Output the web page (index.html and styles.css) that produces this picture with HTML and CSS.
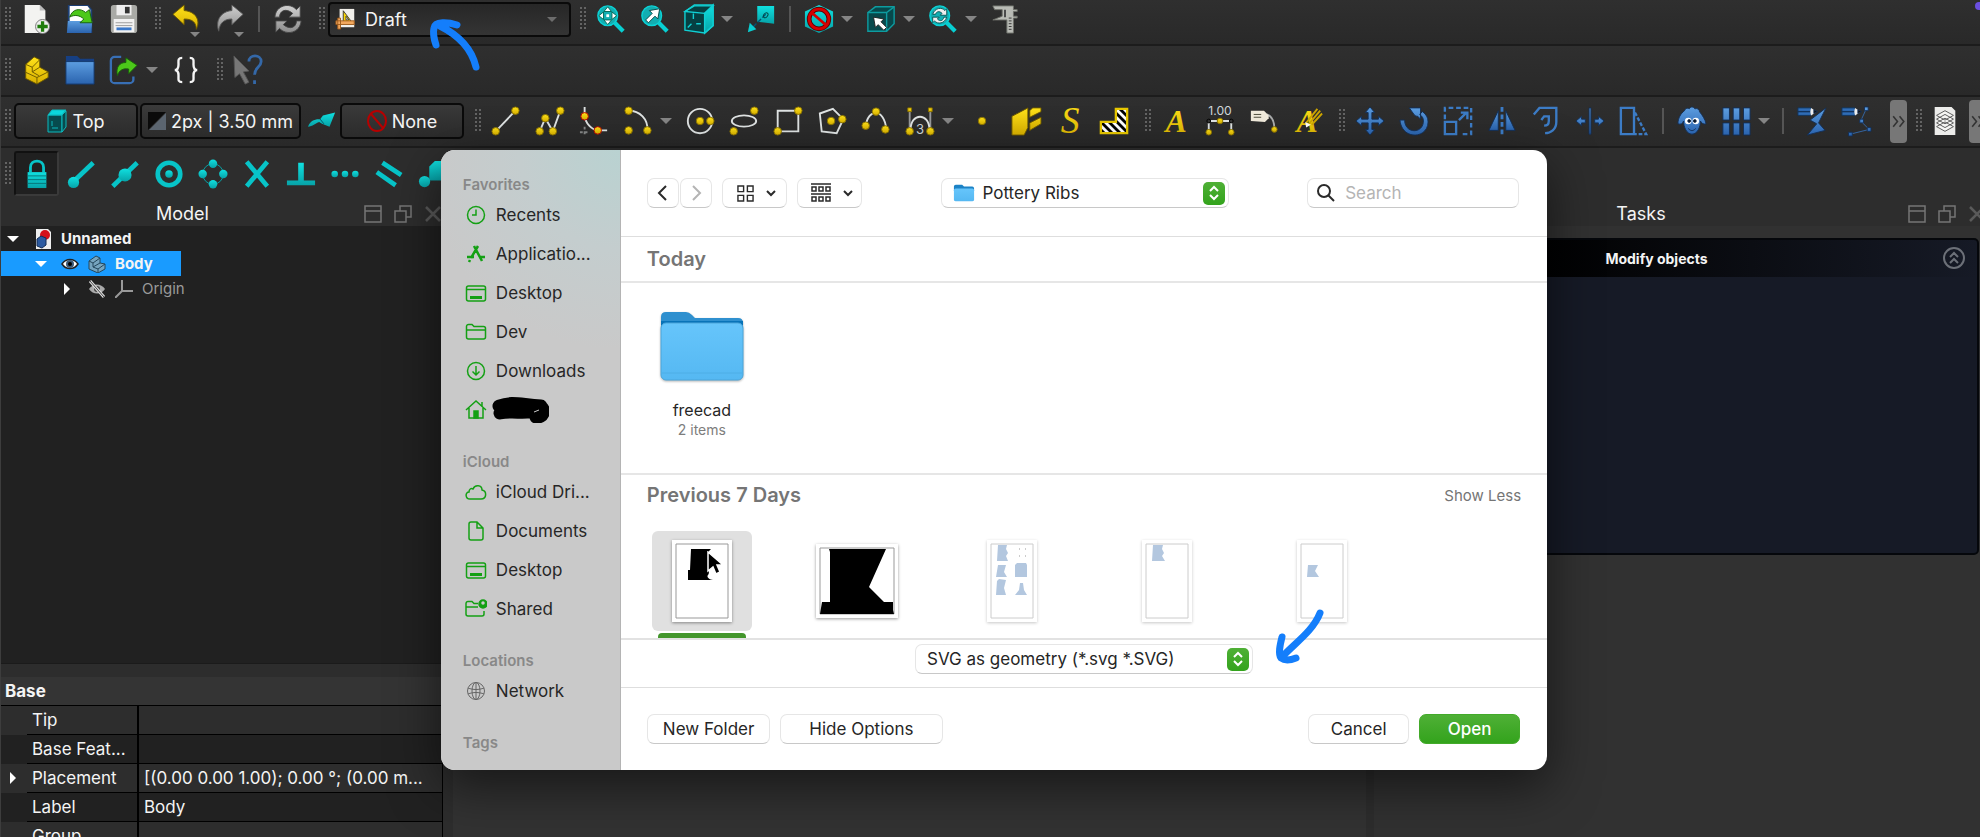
FILE: index.html
```
<!DOCTYPE html>
<html lang="en">
<head>
    <meta charset="UTF-8">
    <meta name="viewport" content="width=device-width, initial-scale=1.0">
    <title>FreeCAD - Import</title>
    <link rel="stylesheet" href="styles.css">
</head>
<body>
    <!-- Shared gradients and symbols -->
    <svg class="defs" aria-hidden="true">
        <defs>
            <linearGradient id="yellow" x1="0" y1="0" x2="0" y2="1"><stop offset="0" stop-color="#ffe21a"/><stop offset="1" stop-color="#d8b000"/></linearGradient>
            <linearGradient id="cyan" x1="0" y1="0" x2="0" y2="1"><stop offset="0" stop-color="#10e0e0"/><stop offset="1" stop-color="#06a3a8"/></linearGradient>
            <linearGradient id="blue" x1="0" y1="0" x2="0" y2="1"><stop offset="0" stop-color="#5c9de0"/><stop offset="1" stop-color="#2a63ae"/></linearGradient>
            <linearGradient id="grey" x1="0" y1="0" x2="0" y2="1"><stop offset="0" stop-color="#d0d0d0"/><stop offset="1" stop-color="#8c8c8c"/></linearGradient>
            <linearGradient id="folder" x1="0" y1="0" x2="0" y2="1"><stop offset="0" stop-color="#66c5fb"/><stop offset="1" stop-color="#55b8f2"/></linearGradient>
            <pattern id="hatch" width="6" height="6" patternUnits="userSpaceOnUse" patternTransform="rotate(-45)"><rect width="6" height="6" fill="#fff"/><rect width="3" height="6" fill="#000"/></pattern>
            <g id="lens"><path d="M20 20l9 9" stroke="#08cfd2" stroke-width="4.500"/><circle cx="12.500" cy="12.500" r="10.500" fill="#12aeb2" stroke="#0bd3d6" stroke-width="1.500"/></g>
            <g id="pencil"><path d="M1 2h14v8H1z" fill="#2f6cb5" stroke="#12335c"/><path d="M1 6h13" stroke="#12335c" stroke-width="1.500"/><path d="M15 2l6 4-6 4c-1-2-1-6 0-8z" fill="#eee" stroke="none"/><path d="M18 4l4 2-4 2z" fill="#111"/></g>
            <g id="foldericon"><path d="M3 3h7l2 2h9a2 2 0 0 1 2 2v3H1V5a2 2 0 0 1 2-2z" fill="#1b82c6"/><rect x="1" y="7" width="22" height="14" rx="2" fill="url(#folder)"/></g>
            <g id="desktop" fill="none" stroke="#14a014" stroke-width="1.500"><rect x="1.500" y="4" width="19" height="15" rx="2"/><path d="M2 7.500h18"/><path d="M5 15.500h12" stroke-width="3"/></g>
        </defs>
    </svg>

    <div class="app">
        <!-- File and view toolbar -->
        <div class="toolbar first">
            <span class="grip"></span>
            <button class="tool" aria-label="New"><svg viewBox="0 0 32 32"><path d="M4 1h16l6 6v24H4z" fill="#f3f3f1"/><path d="M20 1v6h6z" fill="#bbb"/><circle cx="23" cy="24" r="7.500" fill="#eee" stroke="#777"/><path d="M23 18.500v11M17.500 24h11" stroke="#1f7d0c" stroke-width="3.500"/></svg></button>
            <button class="tool" aria-label="Open"><svg viewBox="0 0 32 32"><path d="M3 1h22l4 5v25H3z" fill="#1c3f75"/><path d="M5 2h19l3 4v12H5z" fill="#fff"/><path d="M3 18h26l-1 13H2z" fill="url(#blue)"/><path d="M5 14C8 5 16 4 22 9l4-3 3 14-13 0 4-4C16 12 10 11 5 14z" fill="#4cc81a" stroke="#17600a"/></svg></button>
            <button class="tool" aria-label="Save"><svg viewBox="0 0 32 32"><rect x="2" y="1" width="28" height="30" rx="3" fill="#a9aaa6"/><path d="M8 1h16v11H8z" fill="#eee"/><path d="M17 3h5v7h-5z" fill="#333"/><path d="M5 16h22v14H5z" fill="#f2f2f2"/><path d="M7 20h18M7 23h18" stroke="#999"/><path d="M8 25h16v3H8z" fill="#3a78ca"/></svg></button>
            <span class="grip"></span>
            <button class="tool" aria-label="Undo"><svg viewBox="0 0 32 32"><path d="M2 11L14 1v6c12 1 18 10 13 20 0-8-5-11-13-11v6z" fill="url(#yellow)" stroke="#6b5800"/></svg><i class="mini"></i></button>
            <button class="tool" aria-label="Redo"><svg viewBox="0 0 32 32"><path d="M30 11L18 1v6C6 8 0 18 4 29c1-9 6-13 14-13v6z" fill="url(#grey)" stroke="#555"/></svg><i class="mini"></i></button>
            <span class="sep"></span>
            <button class="tool" aria-label="Refresh"><svg viewBox="0 0 32 32"><path d="M2 14C3 1 18-2 25 6l4-4v12H17l4-4C14 4 7 7 7 14zM30 18C29 31 14 34 7 26l-4 4V18h12l-4 4c7 6 14 3 14-4z" fill="url(#grey)" stroke="#444"/></svg></button>
            <span class="grip"></span>
            <label class="workbench">
                <svg viewBox="0 0 24 24"><path d="M5 1h16v20H5z" fill="#f1efea"/><path d="M9 3v12h9z" fill="#ffd900" stroke="#333"/><path d="M12 9v4h3z" fill="#fff" stroke="#333"/><path d="M1 14h20v4H1zM3 11h3v12H3z" fill="#f2a85e" stroke="#9c5a1a"/></svg>
                <select aria-label="Workbench"><option>Draft</option><option>Part Design</option><option>Sketcher</option></select>
            </label>
            <span class="grip"></span>
            <button class="tool" aria-label="Fit all"><svg viewBox="0 0 32 32"><use href="#lens"/><path d="M12.500 3l4 5h-8zM12.500 22l4-5h-8zM3 12.500l5-4v8zM22 12.500l-5-4v8z" fill="#fff" stroke="#065"/><path d="M11 11h3v3h-3z" fill="#fff"/></svg></button>
            <button class="tool" aria-label="Fit selection"><svg viewBox="0 0 32 32"><use href="#lens"/><path d="M6 17l7-7-3-3 11-2-2 11-3-3-7 7z" fill="#fff" stroke="#044"/></svg></button>
            <button class="tool" aria-label="Isometric view"><svg viewBox="0 0 32 32" fill="#063f42" stroke="#10cfd3" stroke-width="1.500"><path d="M1 8L11 1h20v22l-9 8L1 28z"/><path d="M22 10l9-9v22l-9 8z" fill="url(#cyan)"/><path d="M1 8l10-6h20l-9 8zM10 10v6M8 21l-4 4M13 21h5" fill="none"/></svg></button>
            <button class="caret" aria-label="More views"></button>
            <button class="tool" aria-label="Go to linked object"><svg viewBox="0 0 32 32"><path d="M12 2h18v19L12 19z" fill="url(#cyan)"/><path d="M21 11L6 26" stroke="#057" stroke-width="1.500" stroke-dasharray="5 2"/><path d="M2 30l2-10 7 7z" fill="#09cdd0"/><ellipse cx="21" cy="12" rx="2" ry="3" fill="none" stroke="#044" transform="rotate(40 21 12)"/></svg></button>
            <span class="sep"></span>
            <button class="tool" aria-label="Draw style"><svg viewBox="0 0 32 32"><path d="M16 1l15 7v16l-15 7-15-7V8z" fill="url(#cyan)"/><circle cx="16" cy="16" r="10.500" fill="none" stroke="#5e0000" stroke-width="5"/><circle cx="16" cy="16" r="10.500" fill="none" stroke="#d40000" stroke-width="3"/><path d="M8 9l16 14" stroke="#d40000" stroke-width="3"/></svg></button>
            <button class="caret" aria-label="More draw styles"></button>
            <button class="tool" aria-label="Box selection"><svg viewBox="0 0 32 32" fill="#07484b" stroke="#0e9ca0" stroke-width="1.500"><path d="M2 9l8-6h20v18l-8 8H2z"/><path d="M2 9h20l8-6M22 9v20" fill="none"/><path d="M8 14l11 2-3 3 6 6-3 3-6-6-3 3z" fill="#fff" stroke="#222" stroke-width="1"/></svg></button>
            <button class="caret" aria-label="More selection modes"></button>
            <button class="tool" aria-label="Sync view"><svg viewBox="0 0 32 32"><use href="#lens"/><path d="M5 11c2-7 10-8 13-4l2-2v7h-7l2-2c-3-3-6-2-7 1zM20 14c-2 7-10 8-13 4l-2 2v-6h7l-2 2c3 3 6 2 7-2z" fill="#eee" stroke="#055"/></svg></button>
            <button class="caret" aria-label="More sync modes"></button>
            <button class="tool" aria-label="Measure"><svg viewBox="0 0 32 32"><path d="M3 2h22v4h4v2h-4v5h4v2h-4v16h-7V17H3l10-4V6H5z" fill="#b9bbb5" stroke="#6d6f69"/><path d="M16 6v8" stroke="#444" stroke-width="2"/><path d="M20 15h3M20 18h3M20 21h3M20 24h3M20 27h3" stroke="#333"/></svg></button>
        </div>

        <!-- Structure toolbar -->
        <div class="toolbar">
            <span class="grip"></span>
            <button class="tool" aria-label="Create part"><svg viewBox="0 0 32 32" fill="url(#yellow)" stroke="#6b5800"><path d="M5 10l9-8 6 3v8l9 5v6l-12 7-12-6z"/><path d="M5 10l7 3 8-8M12 13v5l8-5M4 18l13 6 12-6M17 24v7M12 18l7 4" fill="none"/></svg></button>
            <button class="tool" aria-label="Create group"><svg viewBox="0 0 32 32"><path d="M1 1h12l3 3h15v8H1z" fill="#163f82"/><path d="M1 7h30v24H1z" fill="url(#blue)" stroke="#143a6e"/></svg></button>
            <button class="tool" aria-label="Make link"><svg viewBox="0 0 32 32"><path d="M13 2H6a4 4 0 0 0-4 4v20a4 4 0 0 0 4 4h16a4 4 0 0 0 4-4v-3" fill="none" stroke="#386fb5" stroke-width="2.500"/><path d="M9 22C7 13 11 8 18 8V3l12 8-9 9v-5c-6-1-10 1-12 7z" fill="#4cc81a" stroke="#17600a"/></svg></button>
            <button class="caret" aria-label="More links"></button>
            <button class="tool" aria-label="Variable set"><svg viewBox="0 0 32 32" fill="none" stroke="#f5f5f5" stroke-width="2.500"><path d="M12 3C7 3 8 6 8 10s-1 6-4 6c3 0 4 2 4 6s-1 7 4 7M20 3c5 0 4 3 4 7s1 6 4 6c-3 0-4 2-4 6s1 7-4 7"/></svg></button>
            <span class="grip"></span>
            <button class="tool" aria-label="What's this?"><svg viewBox="0 0 32 32"><path d="M1 1l16 16-6 1 6 11-4 2-6-11-5 4z" fill="#777" stroke="#555"/><path d="M17 7c0-8 13-8 13 0 0 6-7 6-7 14M23 27v4" fill="none" stroke="#3468a8" stroke-width="3"/></svg></button>
        </div>

        <!-- Draft tools toolbar -->
        <div class="toolbar">
            <span class="grip"></span>
            <button class="tray plane"><svg viewBox="0 0 20 24" fill="#074b4e" stroke="#0db9bd" stroke-width="1"><path d="M1 6h14v17H1z"/><path d="M15 6l4-4v16l-4 5z"/><path d="M1 6l4-5h14l-4 5z" fill="#0bd8dc"/><path d="M5 12v5M5 19h6" fill="none"/></svg>Top</button>
            <button class="tray style"><svg viewBox="0 0 18 18"><path d="M0 0h18L0 18z" fill="#0a0a0a"/><path d="M18 1v17H1z" fill="#5b6570"/></svg>2px | 3.50 mm</button>
            <button class="tool narrow" aria-label="Toggle construction mode"><svg viewBox="0 0 32 32"><path d="M1 22c3-8 9-8 13-8l3-4 13-3-6 15-8-3-3-2c-4 1-7 5-12 5z" fill="url(#cyan)"/><path d="M14 14l4 5" stroke="#056"/></svg></button>
            <button class="tray plane"><svg viewBox="0 0 20 24" fill="none" stroke="#b60000" stroke-width="2"><ellipse cx="10" cy="12" rx="9" ry="10"/><path d="M4 5l12 14"/></svg>None</button>
            <span class="grip"></span>
            <button class="tool" aria-label="Line"><svg viewBox="0 0 32 32" class="draft"><path d="M5 27L26 5"/><circle cx="5" cy="27" r="4"/><circle cx="26" cy="5" r="4"/></svg></button>
            <button class="tool" aria-label="Polyline"><svg viewBox="0 0 32 32" class="draft"><path d="M5 27l6-14 8 14 8-22"/><circle cx="5" cy="27" r="4"/><circle cx="11" cy="13" r="4"/><circle cx="19" cy="27" r="4"/><circle cx="27" cy="5" r="4"/></svg></button>
            <button class="tool" aria-label="Fillet"><svg viewBox="0 0 32 32" class="draft red"><path d="M6 1v8c0 9 8 17 15 17h9"/><path d="M6 22v9M1 28h9" stroke-dasharray="3 2" opacity=".5"/><circle cx="6" cy="11" r="4"/><circle cx="20" cy="26" r="4"/></svg></button>
            <button class="tool" aria-label="Arc"><svg viewBox="0 0 32 32" class="draft"><path d="M6 5c12 0 21 9 20 21"/><circle cx="6" cy="5" r="4"/><circle cx="6" cy="26" r="4"/><circle cx="26" cy="26" r="4"/></svg></button>
            <button class="caret" aria-label="More arcs"></button>
            <button class="tool" aria-label="Circle"><svg viewBox="0 0 32 32" class="draft"><circle cx="16" cy="16" r="13" class="shape"/><circle cx="16" cy="16" r="4"/><circle cx="27" cy="16" r="4"/></svg></button>
            <button class="tool" aria-label="Ellipse"><svg viewBox="0 0 32 32" class="draft"><ellipse cx="16" cy="16" rx="13" ry="6" class="shape"/><circle cx="5" cy="27" r="4"/><circle cx="27" cy="5" r="4"/></svg></button>
            <button class="tool" aria-label="Rectangle"><svg viewBox="0 0 32 32" class="draft"><path d="M5 5h22v22H5z"/><circle cx="5" cy="27" r="4"/><circle cx="27" cy="5" r="4"/></svg></button>
            <button class="tool" aria-label="Polygon"><svg viewBox="0 0 32 32" class="draft"><path d="M17 3l11 11-7 15-16-2L3 8z"/><circle cx="15" cy="16" r="4"/><circle cx="27" cy="14" r="4"/></svg></button>
            <button class="tool" aria-label="B-spline"><svg viewBox="0 0 32 32" class="draft"><path d="M5 22C7 2 25 2 27 25"/><circle cx="5" cy="21" r="4"/><circle cx="16" cy="6" r="4"/><circle cx="26" cy="25" r="4"/></svg></button>
            <button class="tool" aria-label="Bezier curve"><svg viewBox="0 0 32 32" class="draft"><path d="M5 4v23M27 4v23" opacity=".6"/><path d="M6 25c0-18 20-18 20 0"/><circle cx="5" cy="27" r="4"/><circle cx="27" cy="27" r="4"/><path d="M3 2h4v4H3zM25 2h4v4h-4z" class="dot"/><text x="16" y="30" class="num">3</text></svg></button>
            <button class="caret" aria-label="More curves"></button>
            <button class="tool" aria-label="Point"><svg viewBox="0 0 32 32" class="draft"><circle cx="16" cy="16" r="4"/></svg></button>
            <button class="tool" aria-label="Facebinder"><svg viewBox="0 0 32 32" fill="url(#yellow)" stroke="#6b5800"><path d="M1 11L18 2v21l-4 8H1z"/><path d="M20 5l3-3h9v4l-12 6zM20 18l12-6v7l-12 7z"/></svg></button>
            <button class="tool" aria-label="ShapeString"><svg viewBox="0 0 32 32"><text x="16" y="29" class="glyph swash">S</text></svg></button>
            <button class="tool" aria-label="Hatch"><svg viewBox="0 0 32 32"><path d="M18 3h12v26H2V17h16z" fill="url(#hatch)" stroke="#e8c800" stroke-width="2.500"/></svg></button>
            <span class="grip"></span>
            <button class="tool" aria-label="Text"><svg viewBox="0 0 32 32"><text x="16" y="28" class="glyph">A</text></svg></button>
            <button class="tool" aria-label="Dimension"><svg viewBox="0 0 32 32" class="draft"><text x="16" y="10" class="num small">1.00</text><path d="M4 16v12M28 16v12M4 16h24"/><circle cx="4" cy="28" r="3"/><circle cx="28" cy="28" r="3"/><circle cx="16" cy="16" r="3"/><circle cx="4" cy="16" r="2" class="ring"/><circle cx="28" cy="16" r="2" class="ring"/></svg></button>
            <button class="tool" aria-label="Label"><svg viewBox="0 0 32 32" class="draft"><path d="M19 9c6 2 8 7 8 15" opacity=".7"/><path d="M2 5h14l5 5v3l-4 4-15-1z" fill="#f1ebdc" stroke="none"/><path d="M5 9h8M5 12h8" stroke="#443" stroke-width="1"/><circle cx="27" cy="25" r="3"/></svg></button>
            <button class="tool" aria-label="Annotation styles"><svg viewBox="0 0 32 32"><text x="15" y="28" class="glyph">A</text><path d="M14 18L26 3M17 19L29 5M20 20L31 8" stroke="#cda500" stroke-width="2"/><path d="M13 17l6 3-5 3z" fill="#fff"/></svg></button>
            <span class="grip"></span>
            <button class="tool" aria-label="Move"><svg viewBox="0 0 32 32" class="modify"><path d="M16 1l5 6h-3v7h7v-3l6 5-6 5v-3h-7v7h3l-5 6-5-6h3v-7H7v3l-6-5 6-5v3h7V7h-3z"/></svg></button>
            <button class="tool" aria-label="Rotate"><svg viewBox="0 0 32 32" class="modify"><path d="M11 2h12v12l-3-3c-2 0-3-1-4-2zM1 15h5c0 15 20 15 20 1 0-3-1-5-4-7l3-3c4 3 6 6 6 11 0 18-28 20-30-2z"/></svg></button>
            <button class="tool" aria-label="Scale"><svg viewBox="0 0 32 32" class="modify line"><path d="M2 14V2h28v28H18" stroke-dasharray="5 3"/><path d="M2 17h12v13H2z"/><path d="M17 15l8-8M19 7h7v7"/></svg></button>
            <button class="tool" aria-label="Mirror"><svg viewBox="0 0 32 32" class="modify"><path d="M12 5v21H2zM20 5v21h10z"/><path d="M16 1v30" class="dash"/></svg></button>
            <button class="tool" aria-label="Offset"><svg viewBox="0 0 32 32" class="modify line"><path d="M3 9l6-7h18v15c0 8-6 12-12 12"/><path d="M11 15l3-4h5v5c0 3-2 5-5 5"/></svg></button>
            <button class="tool" aria-label="Trimex"><svg viewBox="0 0 32 32" class="modify"><path d="M15 2h2v28h-2zM1 16l6-5v3h4v4H7v3zM31 16l-6-5v3h-4v4h4v3z"/></svg></button>
            <button class="tool" aria-label="Stretch"><svg viewBox="0 0 32 32" class="modify line"><path d="M2 2h14v28H2z"/><path d="M17 7l12 23H17" stroke-dasharray="4 2"/></svg></button>
            <span class="sep"></span>
            <button class="tool" aria-label="Clone"><svg viewBox="0 0 32 32" class="modify"><path d="M8 5c1-3 4-3 5-2 2-3 5-2 6 0 3-1 5 1 5 3 3 4 6 8 7 13-3 1-5-1-6-3 0 6-3 14-9 14S7 22 7 16c-1 3-3 4-6 3 0-6 3-11 7-14z"/><circle cx="12" cy="16" r="3.500" fill="#fff" stroke="none"/><circle cx="20" cy="16" r="3.500" fill="#fff" stroke="none"/><circle cx="13" cy="16" r="1.500" fill="#111"/><circle cx="19" cy="16" r="1.500" fill="#111"/><path d="M12 24c3 3 5 3 8 0" fill="none"/></svg></button>
            <button class="tool" aria-label="Array"><svg viewBox="0 0 32 32" class="modify"><path d="M2 2h7v13H2zM13 2h7v13h-7zM24 2h7v13h-7zM2 18h7v13H2zM13 18h7v13h-7zM24 18h7v13h-7z"/></svg></button>
            <button class="caret" aria-label="More arrays"></button>
            <span class="sep"></span>
            <button class="tool" aria-label="Edit"><svg viewBox="0 0 32 32" class="modify"><path d="M31 2L14 15l7 4-10 12 19-5-7-8z"/><use href="#pencil"/></svg></button>
            <button class="tool" aria-label="Subelement highlight"><svg viewBox="0 0 32 32" class="modify"><path d="M27 3l-6 13 9 9-20 5" fill="none" stroke="#3468a8"/><path d="M25 1h4v4h-4zM20 14h4v4h-4zM28 23h4v4h-4zM8 28h4v4H8z"/><use href="#pencil"/></svg></button>
            <button class="more" aria-label="More tools"><svg viewBox="0 0 16 16" fill="none" stroke="#333" stroke-width="1.500"><path d="M3 3l4 5-4 5M9 3l4 5-4 5"/></svg></button>
            <span class="grip"></span>
            <button class="tool layers" aria-label="Layers"><svg viewBox="0 0 32 32"><path d="M5 1h18l4 4v26H5z" fill="#ececea"/><path d="M7 22l9 5 9-5-9-5zM7 18l9 5 9-5-9-5zM7 14l9 5 9-5-9-5zM7 10l9 5 9-5-9-5z" fill="#f5f5f3" stroke="#555"/></svg></button>
            <button class="more" aria-label="More utilities"><svg viewBox="0 0 16 16" fill="none" stroke="#333" stroke-width="1.500"><path d="M3 3l4 5-4 5M9 3l4 5-4 5"/></svg></button>
        </div>

        <!-- Snap toolbar -->
        <div class="toolbar snap">
            <span class="grip"></span>
            <button class="tool lock" aria-label="Snap lock"><svg viewBox="0 0 32 32"><path d="M9 14V9c0-9 14-9 14 0v5" fill="none" stroke="#07c4c8" stroke-width="3"/><path d="M6 14h20v17H6z" fill="url(#cyan)"/><path d="M6 18h20M6 22h20M6 26h20" stroke="#067478"/></svg></button>
            <button class="tool" aria-label="Endpoint"><svg viewBox="0 0 32 32" class="snapicon"><path d="M8 24L29 4" class="bar"/><circle cx="8" cy="25" r="6"/></svg></button>
            <button class="tool" aria-label="Midpoint"><svg viewBox="0 0 32 32" class="snapicon"><path d="M3 29L29 4" class="bar"/><circle cx="16" cy="17" r="7"/></svg></button>
            <button class="tool" aria-label="Center"><svg viewBox="0 0 32 32" class="snapicon"><circle cx="16" cy="16" r="12" class="ringbar"/><circle cx="16" cy="16" r="4"/></svg></button>
            <button class="tool" aria-label="Angle"><svg viewBox="0 0 32 32" class="snapicon"><circle cx="16" cy="16" r="11" class="thin"/><circle cx="16" cy="5" r="4.500"/><circle cx="16" cy="27" r="4.500"/><circle cx="5" cy="16" r="4.500"/><circle cx="27" cy="16" r="4.500"/></svg></button>
            <button class="tool" aria-label="Intersection"><svg viewBox="0 0 32 32" class="snapicon"><path d="M5 3l22 26M27 3L5 29" class="bar"/></svg></button>
            <button class="tool" aria-label="Perpendicular"><svg viewBox="0 0 32 32" class="snapicon"><path d="M13 4h6v19h12v5H1v-5h12z"/></svg></button>
            <button class="tool" aria-label="Extension"><svg viewBox="0 0 32 32" class="snapicon"><circle cx="5" cy="16" r="3.500"/><circle cx="16" cy="16" r="3.500"/><circle cx="27" cy="16" r="3.500"/></svg></button>
            <button class="tool" aria-label="Parallel"><svg viewBox="0 0 32 32" class="snapicon"><path d="M9 4l20 13M3 14l20 14" class="bar"/></svg></button>
            <button class="tool" aria-label="Special"><svg viewBox="0 0 32 32" class="snapicon"><path d="M12 8l6-6h14v16l-6 5H12z"/><circle cx="7" cy="24" r="6"/></svg></button>
        </div>

        <div class="workspace">
            <!-- Model tree and properties -->
            <aside class="dock">
                <header class="dock-title">
                    <h2>Model</h2>
                    <div class="dock-buttons">
                        <button aria-label="Minimize"><svg viewBox="0 0 18 18"><path d="M1 1h16v16H1zM1 6h16"/></svg></button>
                        <button aria-label="Float"><svg viewBox="0 0 18 18"><path d="M6 6V1h11v11h-5M1 6h11v11H1z"/></svg></button>
                        <button aria-label="Close"><svg viewBox="0 0 18 18" class="thick"><path d="M2 2l14 14M16 2L2 16"/></svg></button>
                    </div>
                </header>
                <ul class="tree">
                    <li><i class="down"></i><svg class="doc" viewBox="0 0 18 20"><path d="M2 0h12l3 3v17H2z" fill="#eee"/><circle cx="11" cy="6" r="5" fill="#d4101a"/><path d="M3 10l4-3 5 2v7l-4 3-5-2z" fill="#2c5aa0" stroke="#132c54"/></svg><b>Unnamed</b></li>
                    <li class="selected"><i class="down"></i><svg viewBox="0 0 18 18"><path d="M1 9c4-6 12-6 16 0-4 6-12 6-16 0z" fill="#fff" stroke="#222" stroke-width="1.500"/><circle cx="9" cy="9" r="4" fill="#3c5a78"/><circle cx="9" cy="9" r="2"/></svg><svg viewBox="0 0 18 18" fill="#76a5bf" stroke="#24475c"><path d="M1 6l7-5 4 2v5l5 1v5l-7 4-9-4z"/><path d="M1 6l4 2 7-5M5 8v4l5 2 7-5M10 14v4M5 12l7-4" fill="none"/></svg><b>Body</b></li>
                    <li class="child"><i class="right"></i><svg viewBox="0 0 18 18"><path d="M1 9c4-6 12-6 16 0-4 6-12 6-16 0z" fill="#aaa"/><circle cx="9" cy="9" r="3" fill="#444"/><path d="M2 1l14 16" stroke="#ddd" stroke-width="3"/><path d="M2 1l14 16" stroke="#444"/></svg><svg viewBox="0 0 18 18" fill="none" stroke="#999" stroke-width="2"><path d="M7 0v11h11M7 11l-7 7"/></svg><span>Origin</span></li>
                </ul>
                <table class="props">
                    <colgroup><col class="col-toggle"><col class="col-name"><col></colgroup>
                    <thead><tr><th colspan="3">Base</th></tr></thead>
                    <tbody>
                        <tr><td class="toggle"></td><td class="name">Tip</td><td></td></tr>
                        <tr><td class="toggle"></td><td class="name">Base Feat...</td><td></td></tr>
                        <tr><td class="toggle"><i class="right"></i></td><td class="name">Placement</td><td>[(0.00 0.00 1.00); 0.00 °; (0.00 m...</td></tr>
                        <tr><td class="toggle"></td><td class="name">Label</td><td>Body</td></tr>
                        <tr><td class="toggle"></td><td class="name">Group</td><td></td></tr>
                    </tbody>
                </table>
            </aside>

            <main class="viewport"></main>

            <!-- Task panel -->
            <aside class="dock tasks">
                <header class="dock-title">
                    <h2>Tasks</h2>
                    <div class="dock-buttons">
                        <button aria-label="Minimize"><svg viewBox="0 0 18 18"><path d="M1 1h16v16H1zM1 6h16"/></svg></button>
                        <button aria-label="Float"><svg viewBox="0 0 18 18"><path d="M6 6V1h11v11h-5M1 6h11v11H1z"/></svg></button>
                        <button aria-label="Close"><svg viewBox="0 0 18 18" class="thick"><path d="M2 2l14 14M16 2L2 16"/></svg></button>
                    </div>
                </header>
                <section class="task-box">
                    <h3>Modify objects</h3>
                    <button class="collapse" aria-label="Collapse"><svg viewBox="0 0 24 24" fill="none" stroke="#6c7078" stroke-width="2"><circle cx="12" cy="12" r="10"/><path d="M8 11l4-4 4 4M8 17l4-4 4 4"/></svg></button>
                </section>
            </aside>
        </div>
    </div>

    <!-- Import dialog -->
    <div class="overlay">
        <div class="dialog" role="dialog" aria-label="Import">
            <nav class="sidebar">
                <h4>Favorites</h4>
                <a href="#"><svg viewBox="0 0 22 22" class="side"><circle cx="11" cy="11" r="8.500"/><path d="M11 5.500V11H7"/></svg>Recents</a>
                <a href="#"><svg viewBox="0 0 22 22" class="side bold"><path d="M9 3l8 15M13 3L6 15M2 14h7M14 14h6M5 17l-1 2"/></svg>Applicatio...</a>
                <a href="#"><svg viewBox="0 0 22 22"><use href="#desktop"/></svg>Desktop</a>
                <a href="#"><svg viewBox="0 0 22 22" class="side"><path d="M1.500 16V5.500a2 2 0 0 1 2-2H7l2 2h9.500a2 2 0 0 1 2 2V16a2 2 0 0 1-2 2h-15a2 2 0 0 1-2-2zM2 9h18"/></svg>Dev</a>
                <a href="#"><svg viewBox="0 0 22 22" class="side"><circle cx="11" cy="11" r="8.500"/><path d="M11 6v9M7.500 11.500L11 15l3.500-3.500"/></svg>Downloads</a>
                <a href="#" aria-label="Home"><svg viewBox="0 0 22 22" class="side"><path d="M1 11L11 2l10 9M4 9v10h14V9M17 7V3"/><path d="M9 12h4v7H9z" fill="#14a014"/></svg><svg class="scribble" viewBox="0 0 58 26"><path d="M8 9C22 4 30 8 50 9M9 16c15-3 25 2 38-3M50 10c5 3 2 11-5 10" fill="none" stroke="#000" stroke-width="13" stroke-linecap="round"/><path d="M43 15l5-2" stroke="#ccc"/></svg></a>
                <h4>iCloud</h4>
                <a href="#"><svg viewBox="0 0 22 22" class="side"><path d="M5 18c-5 0-5-7-1-7 0-3 2-4 4-3 2-5 9-4 9 1 5 1 5 9-1 9z"/></svg>iCloud Dri...</a>
                <a href="#"><svg viewBox="0 0 22 22" class="side"><path d="M4 4a2 2 0 0 1 2-2h6l6 6v10a2 2 0 0 1-2 2H6a2 2 0 0 1-2-2zM12 2v6h6"/></svg>Documents</a>
                <a href="#"><svg viewBox="0 0 22 22"><use href="#desktop"/></svg>Desktop</a>
                <a href="#"><svg viewBox="0 0 22 22" class="side"><path d="M13 5.500H9l-2-2H3a2 2 0 0 0-2 2V16a2 2 0 0 0 2 2h14a2 2 0 0 0 2-2v-3M1 9h12"/><circle cx="18" cy="6" r="4" fill="#14a014"/><circle cx="18" cy="5" r="1" fill="#ccc" stroke="#ccc"/></svg>Shared</a>
                <h4>Locations</h4>
                <a href="#"><svg viewBox="0 0 22 22" class="side net"><circle cx="11" cy="11" r="8.500"/><ellipse cx="11" cy="11" rx="4" ry="8.500"/><path d="M3 8c5 2 11 2 16 0M3 14c5-2 11-2 16 0M11 2v18"/></svg>Network</a>
                <h4>Tags</h4>
            </nav>

            <div class="pane">
                <div class="dialog-bar">
                    <div class="nav-buttons">
                        <button class="mac" aria-label="Back"><svg viewBox="0 0 16 16"><path d="M11 1L4 8l7 7"/></svg></button>
                        <button class="mac off" aria-label="Forward"><svg viewBox="0 0 16 16"><path d="M5 1l7 7-7 7"/></svg></button>
                    </div>
                    <button class="mac view" aria-label="Icon view"><svg viewBox="0 0 18 18"><path d="M1 1h6v6H1zM11 1h6v6h-6zM1 11h6v6H1zM11 11h6v6h-6z"/></svg><svg class="chev" viewBox="0 0 10 10"><path d="M1 3l4 4 4-4"/></svg></button>
                    <button class="mac view" aria-label="Group by"><svg class="group" viewBox="0 0 20 20"><path d="M0 1h20M0 11h20M1 4h4v4H1zM8 4h4v4H8zM15 4h4v4h-4zM1 14h4v4H1zM8 14h4v4H8zM15 14h4v4h-4z"/></svg><svg class="chev" viewBox="0 0 10 10"><path d="M1 3l4 4 4-4"/></svg></button>
                    <label class="mac popup location">
                        <svg class="small-folder" viewBox="0 0 24 24"><use href="#foldericon"/></svg>
                        <select aria-label="Location"><option>Pottery Ribs</option></select>
                        <span class="stepper"><svg viewBox="0 0 16 20"><path d="M4 8l4-4 4 4M4 12l4 4 4-4"/></svg></span>
                    </label>
                    <label class="mac search">
                        <svg viewBox="0 0 20 20"><circle cx="8" cy="8" r="6"/><path d="M12.500 12.500L18 18"/></svg>
                        <input type="search" placeholder="Search" aria-label="Search">
                    </label>
                </div>

                <h3 class="group-title">Today</h3>
                <div class="files today">
                    <figure>
                        <svg class="big-folder" viewBox="0 0 84 70"><path d="M1 10V6q0-5 5-5h20q3 0 6 3l3 3h43q5 0 5 5v10H1z" fill="#2f90cf"/><path d="M1 10h82v10H1z" fill="#0873b8"/><rect x="1" y="12" width="82" height="57" rx="5" fill="url(#folder)" stroke="#4aa5da"/><path d="M2 62h80" stroke="#4faee6"/></svg>
                        <figcaption>freecad<small>2 items</small></figcaption>
                    </figure>
                </div>

                <div class="group-title second"><h3>Previous 7 Days</h3><a href="#">Show Less</a></div>
                <div class="files week">
                    <figure class="picked">
                        <div class="thumb"><svg viewBox="0 0 60 82"><path d="M4 4h52v74H4z" fill="#fff" stroke="#999"/><path d="M19 9h20c-5 4-1 6-2 9s1 6 0 9 1 6-1 8 2 5 5 5H16V30h2z"/></svg></div>
                        <figcaption></figcaption>
                    </figure>
                    <figure>
                        <div class="thumb wide"><svg viewBox="0 0 82 74"><path d="M4 4h74v66H4z" fill="#fff" stroke="#999"/><path d="M13 5h57L53 43l15 15h9v8l1 4H4l2-12h8V8z"/></svg></div>
                    </figure>
                    <figure class="faded">
                        <div class="thumb"><svg viewBox="0 0 50 82"><path d="M4 4h42v74H4z" fill="#fff" stroke="#ccc"/><g fill="#b3c7df"><path d="M11 5h9l-1 4 2 4-2 3 2 5h-11zM11 25h8l-2 7 3 5H9zM28 25l2-2h9l1 2v12H28zM10 41l2-2 7 1-2 8 2 7H9zM33 43h3l1 7 3 5H28l4-5z"/></g><path d="M32 9h1M38 9h1M32 16h1M38 16h1" stroke="#ccc" stroke-width="2"/></svg></div>
                    </figure>
                    <figure class="faded">
                        <div class="thumb"><svg viewBox="0 0 50 82"><path d="M4 4h42v74H4z" fill="#fff" stroke="#ccc"/><path d="M11 5h10l-1 4 2 4-2 3 3 5H10z" fill="#b3c7df"/></svg></div>
                    </figure>
                    <figure class="faded">
                        <div class="thumb"><svg viewBox="0 0 50 82"><path d="M4 4h42v74H4z" fill="#fff" stroke="#ccc"/><path d="M11 25h10l-3 6 4 6H10z" fill="#b3c7df"/></svg></div>
                    </figure>
                </div>

                <div class="filter">
                    <label class="mac popup type">
                        <select aria-label="File type"><option>SVG as geometry (*.svg *.SVG)</option></select>
                        <span class="stepper"><svg viewBox="0 0 16 20"><path d="M4 8l4-4 4 4M4 12l4 4 4-4"/></svg></span>
                    </label>
                </div>

                <div class="actions">
                    <button class="mac">New Folder</button>
                    <button class="mac options">Hide Options</button>
                    <button class="mac cancel">Cancel</button>
                    <button class="mac primary">Open</button>
                </div>
            </div>
        </div>
    </div>

    <!-- Pointer and annotation arrows -->
    <svg class="pointer" viewBox="0 0 18 26"><path d="M2 1v19l5-4 3 7 4-2-3-7h6z" fill="#000" stroke="#fff" stroke-width="1.500"/></svg>
    <svg class="arrow one" viewBox="0 0 52 64"><path d="M46 53C42 36 30 22 10 12M27 11C18 8 5 7 4 14c-1 4 0 11 2 17"/></svg>
    <svg class="arrow two" viewBox="0 0 54 58"><path d="M47 6C40 24 22 36 10 49M9 30c-2 8-4 17-1 21 4 3 10 2 15 0"/></svg>
    <span class="corner-dot"></span>
</body>
</html>
```

FILE: styles.css
```
* {
    box-sizing: border-box;
}
body {
    margin: 0;
    height: 100vh;
    overflow: hidden;
    position: relative;
    background-color: #2d2d2d;
    color: #f4f4f4;
    font-family: Inter, "Liberation Sans", sans-serif;
    font-size: 17px;
}
button, select, input {
    font: inherit;
    color: inherit;
    background: none;
    border: none;
    padding: 0;
    margin: 0;
}
select, input {
    appearance: none;
    outline: none;
    min-width: 0;
}
h2, h3, h4, ul, figure {
    margin: 0;
    padding: 0;
}
svg {
    display: block;
    flex: none;
}
.defs {
    position: absolute;
    width: 0;
    height: 0;
}
.app {
    height: 100%;
    display: flex;
    flex-direction: column;
    border-left: 1px solid #3d3d3d;
}

/* Toolbars */
.toolbar {
    display: flex;
    align-items: center;
    flex: none;
    height: 51px;
    padding: 0 0 1px 4px;
    background: linear-gradient(#2f2f2f, #292929);
    border-bottom: 2px solid #1c1c1c;
}
.toolbar.first {
    height: 46px;
    padding-bottom: 6px;
}
.toolbar.snap {
    border-bottom: none;
    padding-bottom: 0;
    background: #2d2d2d;
}
.grip {
    flex: none;
    width: 8px;
    height: 24px;
    margin: 0 1px 0 9px;
    background: radial-gradient(circle at 1px 1px, #646464 1px, transparent 1px) 0 0 / 4px 4px;
}
.grip:first-child {
    margin-left: 0;
}
.tool {
    position: relative;
    flex: none;
    width: 44px;
    height: 44px;
    display: flex;
    align-items: center;
    justify-content: center;
}
.tool svg {
    width: 30px;
    height: 30px;
    overflow: visible;
}
.tool.narrow {
    width: 37px;
}
.tool.layers {
    width: 40px;
}
.mini, .caret::before {
    border: 6px solid transparent;
    border-top: 6px solid #858585;
    border-bottom: none;
}
.mini {
    position: absolute;
    right: 8px;
    bottom: 4px;
    border-width: 5px 5px 0;
}
.caret {
    flex: none;
    width: 18px;
    height: 32px;
    display: flex;
    align-items: center;
}
.caret::before {
    content: "";
}
.sep {
    flex: none;
    width: 2px;
    height: 26px;
    margin: 0 6px;
    background: #555;
}
.workbench {
    flex: none;
    display: flex;
    align-items: center;
    gap: 8px;
    width: 243px;
    height: 35px;
    padding: 0 12px 0 5px;
    font-size: 18px;
    border: 2px solid #0a0a0a;
    border-radius: 4px;
    background: linear-gradient(#272727, #343434);
}
.workbench svg {
    width: 22px;
    height: 24px;
}
.workbench select {
    flex: 1;
}
.workbench::after {
    content: "";
    border: 5px solid transparent;
    border-top: 5px solid #6d6d6d;
    border-bottom: none;
}
.tray {
    flex: none;
    display: flex;
    align-items: center;
    justify-content: center;
    gap: 5px;
    height: 36px;
    margin-right: 2px;
    white-space: nowrap;
    font-size: 18px;
    border: 2px solid #0a0a0a;
    border-radius: 5px;
    background: linear-gradient(#3a3a3a, #2b2b2b);
}
.tray.plane {
    width: 124px;
}
.tray.style {
    width: 161px;
}
.tray svg {
    width: 20px;
    height: 24px;
}
.tray.style svg {
    width: 18px;
    height: 18px;
}
.more {
    flex: none;
    width: 17px;
    height: 43px;
    margin-left: 12px;
    border-radius: 4px;
    background: #777;
}
.layers + .more {
    margin-left: 4px;
}
.draft {
    fill: none;
    stroke: #dfe3e3;
    stroke-width: 2;
}
.draft circle, .draft .dot {
    fill: url(#yellow);
    stroke: #8a7200;
    stroke-width: 1;
}
.draft.red circle {
    stroke: #b00;
}
.draft .shape {
    fill: none;
    stroke: #dfe3e3;
    stroke-width: 2;
}
.draft .ring {
    fill: #333;
    stroke: #000;
}
.num {
    fill: #cfd6da;
    stroke: none;
    font-size: 14px;
    text-anchor: middle;
}
.num.small {
    font-size: 13px;
}
.glyph {
    fill: url(#yellow);
    font: italic bold 34px "Liberation Serif", serif;
    text-anchor: middle;
}
.glyph.swash {
    font-weight: normal;
    font-size: 40px;
}
.modify {
    fill: url(#blue);
    stroke: #132f55;
    stroke-width: 1;
}
.modify.line {
    fill: none;
    stroke: #3c7cc6;
    stroke-width: 2.5;
}
.modify .dash {
    stroke: #3c7cc6;
    stroke-width: 3;
    stroke-dasharray: 5 3;
}
.lock {
    width: 45px;
    height: 45px;
    border: 2px solid #111;
    border-right-color: #3a3a3a;
    border-bottom-color: #3a3a3a;
    border-radius: 3px;
    background: #202020;
}
.snapicon {
    fill: url(#cyan);
}
.snapicon .bar {
    stroke: #07c4c8;
    stroke-width: 5;
}
.snapicon .ringbar {
    fill: none;
    stroke: #07c4c8;
    stroke-width: 5;
}
.snapicon .thin {
    fill: none;
    stroke: #07a4a8;
}

/* Docks */
.workspace {
    flex: 1;
    min-height: 0;
    display: grid;
    grid-template-columns: 442px 1fr 606px;
}
.dock {
    display: flex;
    flex-direction: column;
    min-height: 0;
    overflow: hidden;
}
.dock-title {
    display: flex;
    align-items: center;
    flex: none;
    height: 27px;
    padding-top: 2px;
}
.dock-title h2 {
    flex: 1;
    text-align: center;
    font-size: 18px;
    font-weight: normal;
}
.dock-buttons {
    display: flex;
    gap: 12px;
    margin-right: 1px;
}
.dock-buttons button {
    width: 18px;
    height: 18px;
}
.dock-buttons svg {
    fill: none;
    stroke: #757575;
    stroke-width: 1.5;
}
.dock-buttons .thick {
    stroke: #5a5a5a;
    stroke-width: 2.5;
}
.tree {
    flex: 1;
    list-style-type: none;
    font-size: 15px;
    background: #212121;
    border-bottom: 1px solid #1b1b1b;
}
.tree li {
    display: flex;
    align-items: center;
    gap: 9px;
    height: 25px;
    padding-left: 6px;
}
.tree svg {
    width: 18px;
    height: 18px;
}
.tree .doc {
    width: 18px;
    height: 20px;
    margin-left: 6px;
}
.tree .selected {
    width: 180px;
    padding-left: 34px;
    background: #199bff;
}
.tree .selected .down {
    margin-right: 5px;
}
.tree .child {
    padding-left: 63px;
    color: #9a9a9a;
}
.tree .child .right {
    margin-right: 9px;
}
.down {
    border: 6px solid transparent;
    border-top: 6px solid #fff;
    border-bottom: none;
}
.right {
    display: inline-block;
    border: 6px solid transparent;
    border-left: 6px solid #fff;
    border-right: none;
}
.props {
    flex: none;
    width: 100%;
    margin: 13px 0 -14px;
    table-layout: fixed;
    border-collapse: collapse;
    border-right: 1px solid #000;
}
.col-toggle {
    width: 26px;
}
.col-name {
    width: 111px;
}
.props th {
    height: 29px;
    padding: 0 4px;
    text-align: left;
    font-size: 17px;
    background: #343434;
    border-bottom: 1px solid #000;
}
.props td {
    height: 29px;
    padding: 0 0 0 5px;
    line-height: 20px;
    white-space: nowrap;
    border-bottom: 1px solid #000;
}
.props tr:nth-child(odd) td {
    background: #2d2d2d;
}
.props tr:nth-child(even) td {
    background: #212121;
}
.props .toggle {
    border-bottom: none;
    padding-left: 9px;
}
.props .name {
    border-right: 2px solid #000;
}
.viewport {
    margin: 0 8px 0 10px;
    background: #323232;
}
.tasks {
    background: #313131;
}
.tasks .dock-title {
    background: #2d2d2d;
}
.tasks .dock-buttons {
    margin-right: -6px;
}
.task-box {
    display: flex;
    align-items: flex-start;
    height: 317px;
    margin: 12px 1px 0 0;
    padding: 6px 11px;
    border: 2px solid #05070b;
    border-radius: 5px;
    background: linear-gradient(90deg, #000 25%, #161a26 100%) 0 0 / 100% 37px no-repeat, #161a26;
}
.task-box h3 {
    flex: 1;
    padding-right: 16px;
    line-height: 26px;
    text-align: center;
    font-size: 14px;
}
.collapse svg {
    width: 24px;
    height: 24px;
}

/* File dialog */
.overlay {
    position: absolute;
    inset: 150px 0 auto;
    display: flex;
    justify-content: center;
    padding-left: 8px;
}
.dialog {
    display: flex;
    flex: 0 0 56.1%;
    overflow: hidden;
    color: #262626;
    border-radius: 14px;
    background: #fff;
    box-shadow: 0 16px 50px rgba(0, 0, 0, .55);
}
.sidebar {
    flex: none;
    width: 180px;
    padding: 24px 16px 0 22px;
    background: radial-gradient(circle at 100% 0, #b9d2d1 0, #c4cdce 100px, transparent 200px), #c9c9c9;
    border-right: 1px solid #b4b4b4;
}
.sidebar h4 {
    height: 21px;
    line-height: 21px;
    font-size: 15px;
    font-weight: 600;
    color: #888;
}
.sidebar a {
    display: flex;
    align-items: center;
    gap: 9px;
    height: 39px;
    padding-left: 2px;
    white-space: nowrap;
    color: inherit;
    text-decoration: none;
}
.sidebar a + h4 {
    margin-top: 22px;
}
.sidebar svg {
    width: 22px;
    height: 22px;
}
.sidebar .scribble {
    width: 58px;
    height: 26px;
    margin-left: -5px;
}
.side {
    fill: none;
    stroke: #14a014;
    stroke-width: 1.5;
}
.side.bold {
    stroke-width: 2.5;
}
.side.net {
    stroke: #666;
    stroke-width: 1;
}
.pane {
    flex: 1;
    min-width: 0;
}
.mac {
    display: flex;
    align-items: center;
    justify-content: center;
    height: 30px;
    border: 1px solid #e6e6e6;
    border-bottom-color: #c8c8c8;
    border-radius: 7px;
    background: #fff;
    white-space: nowrap;
}
.mac svg {
    fill: none;
    stroke: #2a2a2a;
    stroke-width: 2;
}
.dialog-bar {
    display: flex;
    align-items: center;
    height: 87px;
    padding: 0 28px 0 26px;
    gap: 10px;
    border-bottom: 1px solid #dedede;
}
.nav-buttons {
    display: flex;
    gap: 1px;
}
.nav-buttons .mac {
    width: 32px;
}
.nav-buttons svg {
    width: 16px;
    height: 16px;
}
.mac.off svg {
    stroke: #b4b4b4;
}
.view {
    width: 65px;
    gap: 12px;
    padding-left: 5px;
}
.view svg {
    width: 17px;
    height: 17px;
    stroke-width: 1.5;
}
.view .group {
    width: 20px;
    height: 20px;
}
.view .chev {
    width: 10px;
    height: 10px;
    stroke-width: 2;
}
.popup {
    gap: 8px;
    padding: 0 3px 0 11px;
}
.popup select {
    flex: 1;
}
.popup .small-folder {
    width: 22px;
    height: 22px;
    stroke: none;
}
.location {
    width: 288px;
    margin: 0 auto;
}
.stepper {
    width: 22px;
    height: 23px;
    display: flex;
    align-items: center;
    justify-content: center;
    border-radius: 5px;
    background: linear-gradient(#4fb036, #33a31c);
}
.stepper svg {
    width: 16px;
    height: 20px;
    stroke: #fff;
}
.search {
    width: 212px;
    gap: 9px;
    padding: 0 8px;
}
.search svg {
    width: 20px;
    height: 20px;
}
.search input {
    flex: 1;
}
.search input::placeholder {
    color: #b4b4b4;
}
.group-title {
    height: 46px;
    line-height: 45px;
    padding: 0 26px;
    font-size: 20px;
    font-weight: 600;
    color: #757575;
    border-bottom: 2px solid #e6e6e6;
}
.group-title h3 {
    font-size: 20px;
    font-weight: 600;
}
.group-title.second {
    display: flex;
    justify-content: space-between;
    border-bottom: none;
    border-top: 2px solid #e6e6e6;
    line-height: 41px;
}
.group-title a {
    font-size: 15px;
    font-weight: normal;
    color: inherit;
    text-decoration: none;
}
.files {
    display: flex;
    gap: 55px;
    padding: 0 31px;
}
.files figure {
    flex: none;
    width: 100px;
    display: flex;
    flex-direction: column;
    align-items: center;
}
.today {
    height: 190px;
    padding-top: 28px;
}
.big-folder {
    width: 84px;
    height: 70px;
    margin-bottom: 18px;
    filter: drop-shadow(0 1px 1px rgba(0, 0, 0, .3));
}
.today figcaption {
    text-align: center;
    font-size: 16px;
    line-height: 22px;
}
.today small {
    display: block;
    font-size: 14px;
    line-height: 18px;
    color: #7d7d7d;
}
.week {
    height: 121px;
    padding-top: 12px;
    overflow: hidden;
    border-bottom: 2px solid #e2e2e2;
}
.week figure {
    height: 100px;
    padding-top: 9px;
    border-radius: 6px;
}
.thumb {
    background: #fff;
    box-shadow: 0 1px 3px rgba(0, 0, 0, .4);
}
.thumb svg {
    height: 82px;
}
.thumb.wide {
    margin-top: 4px;
}
.thumb.wide svg {
    height: 74px;
}
.faded .thumb {
    box-shadow: 0 1px 3px rgba(0, 0, 0, .22);
}
.picked {
    background: #e0e0e0;
}
.picked figcaption {
    flex: none;
    width: 88px;
    height: 22px;
    margin-top: 11px;
    border-radius: 4px;
    background: #43962c;
}
.filter {
    display: flex;
    justify-content: center;
    height: 48px;
    padding-top: 4px;
    border-bottom: 1px solid #dedede;
}
.type {
    width: 338px;
}
.actions {
    display: flex;
    align-items: center;
    gap: 10px;
    height: 82px;
    padding: 0 27px 0 26px;
}
.actions .mac {
    min-width: 101px;
    padding: 0 15px;
}
.actions .options {
    padding: 0 28px;
}
.actions .cancel {
    margin-left: auto;
}
.actions .primary {
    color: #fff;
    font-weight: 500;
    border-color: #43aa2a;
    background: linear-gradient(#4fb036, #33a31c);
}

/* Things drawn over the windows */
.pointer {
    position: absolute;
    left: 706px;
    top: 551px;
    width: 18px;
    height: 26px;
}
.arrow {
    position: absolute;
    fill: none;
    stroke: #147efb;
    stroke-width: 7;
    stroke-linecap: round;
    stroke-linejoin: round;
    overflow: visible;
}
.arrow.one {
    left: 430px;
    top: 14px;
    width: 52px;
    height: 64px;
}
.arrow.two {
    left: 1273px;
    top: 607px;
    width: 54px;
    height: 58px;
}
.corner-dot {
    position: absolute;
    right: -3px;
    top: 2px;
    width: 8px;
    height: 8px;
    border-radius: 50%;
    background: #6b4fe0;
}
```
